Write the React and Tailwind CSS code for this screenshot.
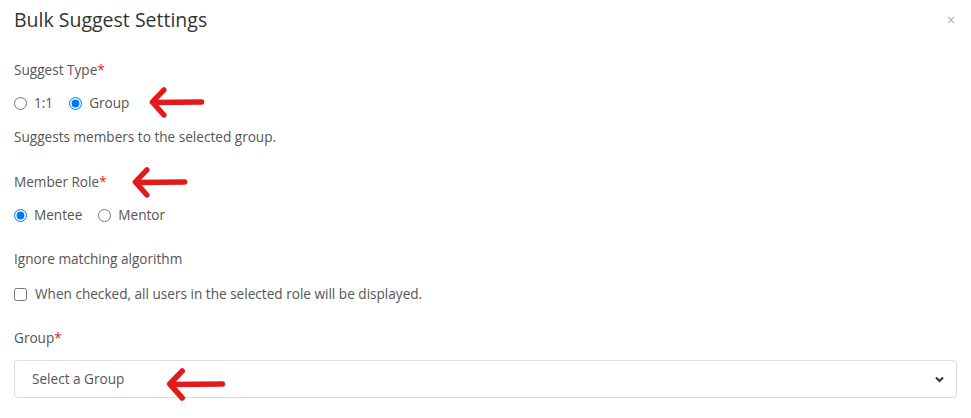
import React from 'react';

const Arrow = ({ className }) => (
  <svg className={className} viewBox="0 0 60 32" fill="none">
    <path
      d="M56 15.5 L6 16 M17 3 L5 15.5 L17 29"
      stroke="#e4191c"
      strokeWidth="5.5"
      strokeLinecap="round"
      strokeLinejoin="round"
    />
  </svg>
);

const Req = () => <span className="text-[#e4191c]">*</span>;

export default function App() {
  return (
    <div className="relative w-[971px] h-[418px] bg-white overflow-hidden text-[13.6px] text-[#555]" style={{ fontFamily: '"Open Sans", "Noto Sans", sans-serif' }}>
      {/* Header */}
      <div className="flex items-center justify-between h-10 pl-[14px] pr-[16px]">
        <h2 className="text-[19.5px] text-[#333] leading-none">Bulk Suggest Settings</h2>
        <button className="text-[#aaa] text-[14px] leading-none">×</button>
      </div>

      {/* Body */}
      <div className="px-[14px] pt-5">
        <div className="leading-5">
          Suggest Type<Req />
        </div>
        <div className="flex items-center h-5 mt-[13px] gap-2">
          <label className="flex items-center gap-[7px] mr-2">
            <input type="radio" name="type" className="m-0 w-[13px] h-[13px]" />
            1:1
          </label>
          <label className="flex items-center gap-[7px]">
            <input type="radio" name="type" defaultChecked className="m-0 w-[13px] h-[13px]" />
            Group
          </label>
        </div>
        <div className="leading-5 mt-[14px]">Suggests members to the selected group.</div>

        <div className="leading-5 mt-[25px]">
          Member Role<Req />
        </div>
        <div className="flex items-center h-5 mt-[13px] gap-2">
          <label className="flex items-center gap-[7px] mr-2">
            <input type="radio" name="role" defaultChecked className="m-0 w-[13px] h-[13px]" />
            Mentee
          </label>
          <label className="flex items-center gap-[7px]">
            <input type="radio" name="role" className="m-0 w-[13px] h-[13px]" />
            Mentor
          </label>
        </div>

        <div className="leading-5 mt-6">Ignore matching algorithm</div>
        <label className="flex items-center h-5 mt-[15px] gap-2">
          <input type="checkbox" className="m-0 w-[13px] h-[13px]" />
          When checked, all users in the selected role will be displayed.
        </label>

        <div className="leading-5 mt-6">
          Group<Req />
        </div>
        <div className="relative mt-3 w-[943px]">
          <select className="appearance-none w-full h-[38px] border border-[#dcdcdc] rounded-[4px] pl-[17px] text-[13.6px] text-[#555] bg-white">
            <option>Select a Group</option>
          </select>
          <svg className="absolute right-[13px] top-[16px] w-[9px] h-[7px]" viewBox="0 0 9 7">
            <path d="M1 1.5 L4.5 5 L8 1.5" stroke="#333" strokeWidth="2" fill="none" />
          </svg>
        </div>
      </div>

      {/* Annotation arrows */}
      <Arrow className="absolute left-[147px] top-[87px] w-[59px] h-[31px]" />
      <Arrow className="absolute left-[128px] top-[167px] w-[63px] h-[31px]" />
      <Arrow className="absolute left-[160px] top-[368px] w-[71px] h-[33px]" />
    </div>
  );
}
